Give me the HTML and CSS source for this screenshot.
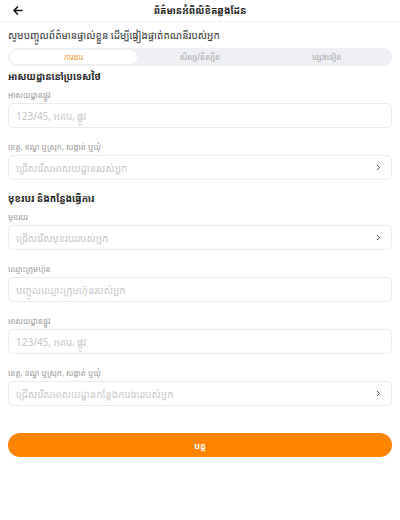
FILE: index.html
```html
<!DOCTYPE html>
<html lang="km">

<head>
  <meta charset="UTF-8" />
  <meta name="viewport" content="width=device-width, initial-scale=1.0" />
  <title>ព័ត៌មានអំពីលិខិតឆ្លងដែន</title>
  <link rel="stylesheet" href="styles.css">
</head>

<body>

  <header class="topbar">
    <span class="back">
      <svg width="10" height="9" viewBox="0 0 10 9">
        <path d="M9 4.5H1.5M4.5 1L1 4.5L4.5 8" fill="none" stroke="#111" stroke-width="1.6" stroke-linecap="round" stroke-linejoin="round" />
      </svg>
    </span>
    <h1>ព័ត៌មានអំពីលិខិតឆ្លងដែន</h1>
  </header>

  <main class="page">
    <p class="intro">សូមបញ្ចូលព័ត៌មានផ្ទាល់ខ្លួន ដើម្បីផ្ទៀងផ្ទាត់គណនីរបស់អ្នក</p>

    <div class="tabs">
      <div class="tab active">ការងារ</div>
      <div class="tab">សិស្ស/និស្សិត</div>
      <div class="tab">ផ្សេងទៀត</div>
    </div>

    <section>
      <h2>អាសយដ្ឋាននៅប្រទេសថៃ</h2>
      <div class="field">
        <label>អាសយដ្ឋានផ្លូវ</label>
        <div class="box">123/45, អគារ, ផ្លូវ</div>
      </div>
      <div class="field">
        <label>ខេត្ត, ខណ្ឌ ឬស្រុក, សង្កាត់ ឬឃុំ</label>
        <div class="box select">ជ្រើសរើសអាសយដ្ឋានរបស់អ្នក
          <svg class="chev" width="5" height="7" viewBox="0 0 5 7"><path d="M1 1l2.5 2.5L1 6" fill="none" stroke="#555" stroke-width="1" /></svg>
        </div>
      </div>
    </section>

    <section>
      <h2>មុខរបរ និងកន្លែងធ្វើការ</h2>
      <div class="field">
        <label>មុខរបរ</label>
        <div class="box select">ជ្រើសរើសមុខរបររបស់អ្នក
          <svg class="chev" width="5" height="7" viewBox="0 0 5 7"><path d="M1 1l2.5 2.5L1 6" fill="none" stroke="#555" stroke-width="1" /></svg>
        </div>
      </div>
      <div class="field">
        <label>ឈ្មោះក្រុមហ៊ុន</label>
        <div class="box">បញ្ចូលឈ្មោះក្រុមហ៊ុនរបស់អ្នក</div>
      </div>
      <div class="field">
        <label>អាសយដ្ឋានផ្លូវ</label>
        <div class="box">123/45, អគារ, ផ្លូវ</div>
      </div>
      <div class="field">
        <label>ខេត្ត, ខណ្ឌ ឬស្រុក, សង្កាត់ ឬឃុំ</label>
        <div class="box select">ជ្រើសរើសអាសយដ្ឋានកន្លែងការងាររបស់អ្នក
          <svg class="chev" width="5" height="7" viewBox="0 0 5 7"><path d="M1 1l2.5 2.5L1 6" fill="none" stroke="#555" stroke-width="1" /></svg>
        </div>
      </div>
    </section>

    <button class="next">បន្ត</button>
  </main>

</body>

</html>
```

FILE: styles.css
```css
body {
  margin: 0;
  padding: 0;
  background: #ffffff;
  font-family: "Noto Sans Khmer", "Khmer OS", Roboto, "Noto Sans", sans-serif;
  color: #222;
}

.topbar {
  height: 21px;
  border-bottom: 1px solid #f1f1f1;
  display: flex;
  align-items: center;
  justify-content: center;
  position: relative;
}

.back {
  position: absolute;
  left: 13px;
  top: 6px;
  display: flex;
}

.topbar h1 {
  margin: 0;
  font-size: 9.5px;
  font-weight: 700;
  line-height: 21px;
}

.page {
  padding: 0 8px;
}

.intro {
  margin: 5px 0 5px;
  font-size: 10px;
  line-height: 16px;
  color: #333;
}

.tabs {
  display: flex;
  background: #eef0f3;
  border-radius: 10px;
  padding: 2px;
  height: 14px;
}

.tab {
  flex: 1;
  text-align: center;
  font-size: 8px;
  line-height: 14px;
  color: #aaa;
  border-radius: 8px;
}

.tab.active {
  background: #fff;
  color: #f29a2e;
}

section {
  margin-top: 3px;
}

h2 {
  margin: 0 0 2px;
  font-size: 9.5px;
  font-weight: 700;
  line-height: 16px;
}

section + section {
  margin-top: 6px;
}

.field {
  margin-bottom: 11px;
}

.field label {
  display: block;
  font-size: 8px;
  line-height: 16px;
  color: #999;
}

.box {
  height: 25px;
  box-sizing: border-box;
  border: 1px solid #ececec;
  border-radius: 5px;
  padding: 0 7px;
  display: flex;
  align-items: center;
  font-size: 10px;
  color: #c8c8c8;
}

.select {
  justify-content: space-between;
}

.chev {
  margin-right: 3px;
}

.next {
  display: block;
  width: 100%;
  height: 24px;
  margin-top: 27px;
  border: none;
  border-radius: 12px;
  background: #ff8500;
  color: #fff;
  font-family: inherit;
  font-size: 9px;
  font-weight: 700;
}
```
